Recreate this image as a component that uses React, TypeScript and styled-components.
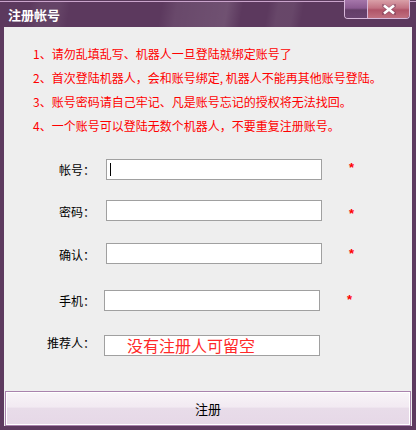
import React from "react";
import styled, { createGlobalStyle } from "styled-components";

const Global = createGlobalStyle`
  html, body { margin: 0; padding: 0; background: #ffffff; }
  * { box-sizing: border-box; }
  body { font-family: "Noto Sans CJK SC", "Liberation Sans", sans-serif; }
`;

const Window = styled.div`
  width: 416px;
  height: 430px;
  display: flex;
  flex-direction: column;
  background: #5d3a5f;
  padding-bottom: 4px;
`;

const TitleBar = styled.div`
  height: 27px;
  flex: none;
  display: flex;
  align-items: flex-start;
  border-top: 1px solid #5a3a5c;
  box-shadow: inset 0 1px 0 #c9a3cb;
  background:
    linear-gradient(100deg,
      transparent 0px, transparent 30px,
      rgba(255,255,255,0.05) 40px, rgba(255,255,255,0.05) 60px,
      transparent 70px, transparent 160px,
      rgba(255,255,255,0.08) 175px, rgba(255,255,255,0.12) 225px,
      transparent 240px, transparent 265px,
      rgba(255,255,255,0.07) 275px, rgba(255,255,255,0.07) 290px,
      transparent 300px),
    #5c395e;
`;

const Title = styled.div`
  color: #ffffff;
  font-weight: bold;
  font-size: 13px;
  line-height: 16px;
  padding: 6px 0 0 8px;
`;

const Controls = styled.div`
  margin-left: auto;
  margin-right: 6px;
  margin-top: -1px;
  display: flex;
  height: 19px;
  border: 1px solid #d8b8da;
  border-top: none;
  border-radius: 0 0 4px 4px;
  overflow: hidden;
`;

const MinPart = styled.div`
  width: 23px;
  background: linear-gradient(#a576aa 0%, #8a5a90 45%, #643e68 55%, #6a4470 100%);
  border-right: 1px solid #d8b8da;
`;

const CloseBtn = styled.div`
  width: 41px;
  display: flex;
  align-items: center;
  justify-content: center;
  background: linear-gradient(#d9a0a8 0%, #c27282 45%, #b05468 55%, #c07080 100%);
`;

const Body = styled.div`
  flex: 1;
  margin: 0 4px;
  background: #eeeeee;
  display: flex;
  flex-direction: column;
`;

const Notes = styled.div`
  padding: 15px 0 0 29px;
  color: #ff0000;
  font-size: 12px;
  line-height: 24px;
`;

const NoteLine = styled.div`
  white-space: nowrap;
`;

const Form = styled.div`
  display: flex;
  flex-direction: column;
  margin-top: 21px;
`;

const Row = styled.div<{ $top: number }>`
  display: flex;
  align-items: flex-start;
  height: 21px;
  margin-top: ${(p) => p.$top}px;
`;

const Label = styled.div<{ $dy: number }>`
  width: 91px;
  text-align: right;
  font-size: 12px;
  line-height: 16px;
  color: #000000;
  white-space: nowrap;
  margin-top: ${(p) => p.$dy}px;
`;

const InputBox = styled.div<{ $left: number }>`
  margin-left: ${(p) => p.$left}px;
  width: 216px;
  height: 21px;
  border: 1px solid #a0a0a0;
  background: #ffffff;
  display: flex;
  align-items: center;
  padding-left: 3px;
`;

const Caret = styled.div`
  width: 1px;
  height: 13px;
  background: #000000;
`;

const Placeholder = styled.span`
  color: #ff2a2a;
  font-size: 16px;
  line-height: 19px;
  padding-left: 19px;
  white-space: nowrap;
`;

const Star = styled.div<{ $dy: number }>`
  margin-left: 27px;
  color: #ff0000;
  font-size: 13px;
  font-weight: bold;
  line-height: 16px;
  margin-top: ${(p) => p.$dy}px;
  font-family: "Liberation Sans", sans-serif;
`;

const ButtonWrap = styled.div`
  margin-top: auto;
  padding: 0 0 0 1px;
`;

const SubmitButton = styled.div`
  height: 35px;
  margin-right: 1px;
  border: 1px solid #a983ad;
  box-shadow: inset 0 0 0 1px #ffffff;
  background: linear-gradient(#f8f4f8 0%, #f2eaf2 45%, #e8dce9 50%, #e6d8e7 100%);
  display: flex;
  align-items: center;
  justify-content: center;
  font-size: 13px;
  color: #000000;
`;

const notes = [
  "1、请勿乱填乱写、机器人一旦登陆就绑定账号了",
  "2、首次登陆机器人，会和账号绑定, 机器人不能再其他账号登陆。",
  "3、账号密码请自己牢记、凡是账号忘记的授权将无法找回。",
  "4、一个账号可以登陆无数个机器人，不要重复注册账号。",
];

type Field = {
  label: string;
  top: number;
  left: number;
  labelDy: number;
  star?: number;
  caret?: boolean;
  placeholder?: string;
};

const fields: Field[] = [
  { label: "帐号：", top: 0, left: 11, labelDy: 3, star: 1, caret: true },
  { label: "密码：", top: 20, left: 11, labelDy: 4, star: 6 },
  { label: "确认：", top: 22, left: 11, labelDy: 4, star: 3 },
  { label: "手机：", top: 26, left: 9, labelDy: 3, star: 2 },
  { label: "推荐人：", top: 24, left: 9, labelDy: 0, placeholder: "没有注册人可留空" },
];

export default function App() {
  return (
    <>
      <Global />
      <Window>
        <TitleBar>
          <Title>注册帐号</Title>
          <Controls>
            <MinPart />
            <CloseBtn>
              <svg width="14" height="11" viewBox="0 0 14 11">
                <path
                  d="M1 1 L13 10 M13 1 L1 10"
                  stroke="#5a3050"
                  strokeWidth="4"
                  strokeLinecap="square"
                  opacity="0.35"
                />
                <path d="M2 1.5 L12 9.5 M12 1.5 L2 9.5" stroke="#ffffff" strokeWidth="2.6" />
              </svg>
            </CloseBtn>
          </Controls>
        </TitleBar>
        <Body>
          <Notes>
            {notes.map((n) => (
              <NoteLine key={n}>{n}</NoteLine>
            ))}
          </Notes>
          <Form>
            {fields.map((f) => (
              <Row key={f.label} $top={f.top}>
                <Label $dy={f.labelDy}>{f.label}</Label>
                <InputBox $left={f.left}>
                  {f.caret && <Caret />}
                  {f.placeholder && <Placeholder>{f.placeholder}</Placeholder>}
                </InputBox>
                {f.star !== undefined && <Star $dy={f.star}>*</Star>}
              </Row>
            ))}
          </Form>
          <ButtonWrap>
            <SubmitButton>注册</SubmitButton>
          </ButtonWrap>
        </Body>
      </Window>
    </>
  );
}
